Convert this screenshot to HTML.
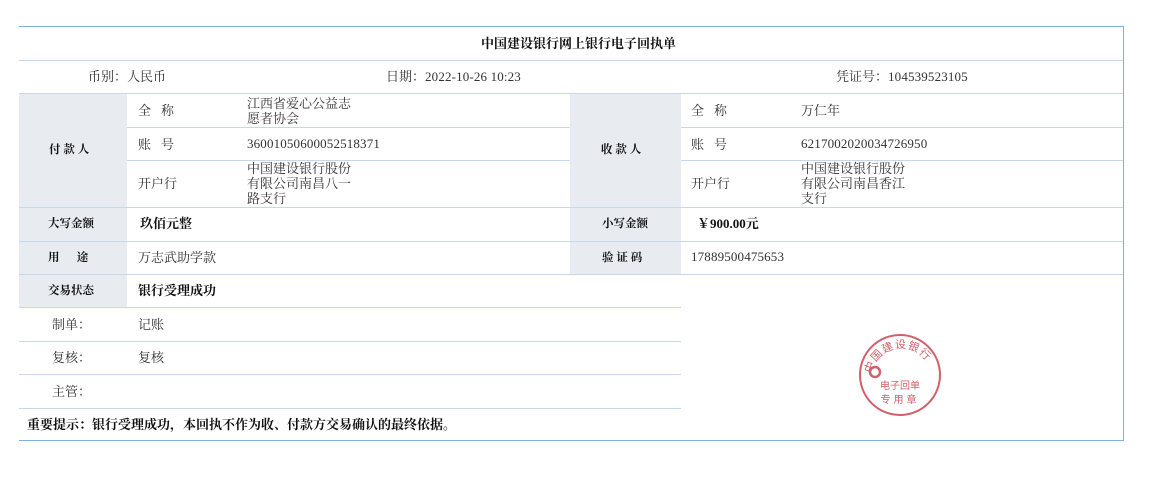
<!DOCTYPE html>
<html><head><meta charset="utf-8"><style>
body{margin:0;width:1157px;height:501px;background:#fff;position:relative;overflow:hidden;font-family:"Noto Serif CJK SC","Liberation Serif",serif;color:#333;}
div{position:absolute;}
.g{background:#e8ecf0;}
.h{height:1px;background:#c6d8ec;}
.t{font-size:13px;line-height:15px;white-space:nowrap;}
.b{font-weight:bold;color:#111;font-size:11.5px;}
.bb{font-weight:bold;color:#111;font-size:13px;}
.n{font-family:"Liberation Serif",serif;font-size:13px;letter-spacing:0.15px;}
</style></head><body>
<div class="g" style="left:19px;top:94px;width:108px;height:214px"></div>
<div class="g" style="left:570px;top:94px;width:111px;height:181px"></div>
<div style="left:19px;top:26px;width:1105px;height:1px;background:#7fb0e0"></div>
<div class="h" style="left:19px;top:60px;width:1105px"></div>
<div class="h" style="left:19px;top:93px;width:1105px"></div>
<div class="h" style="left:127px;top:127px;width:443px"></div>
<div class="h" style="left:681px;top:127px;width:443px"></div>
<div class="h" style="left:127px;top:160px;width:443px"></div>
<div class="h" style="left:681px;top:160px;width:443px"></div>
<div class="h" style="left:19px;top:207px;width:1105px"></div>
<div class="h" style="left:19px;top:241px;width:1105px"></div>
<div class="h" style="left:19px;top:274px;width:1105px"></div>
<div class="h" style="left:19px;top:307px;width:662px"></div>
<div class="h" style="left:19px;top:341px;width:662px"></div>
<div class="h" style="left:19px;top:374px;width:662px"></div>
<div class="h" style="left:19px;top:408px;width:662px"></div>
<div style="left:19px;top:440px;width:1105px;height:1px;background:#7fb0e0"></div>
<div style="left:1123px;top:26px;width:1px;height:415px;background:#7fb0e0"></div>

<div class="t bb" style="left:0;width:1157px;text-align:center;top:35px">中国建设银行网上银行电子回执单</div>
<div class="t" style="left:88px;top:68px">币别：人民币</div>
<div class="t" style="left:386px;top:68px">日期：<span class="n">2022-10-26 10:23</span></div>
<div class="t" style="left:836px;top:68px">凭证号：<span class="n">104539523105</span></div>

<div class="t b" style="left:49px;top:142px">付 款 人</div>
<div class="t" style="left:138px;top:102px">全&nbsp;&nbsp;&nbsp;称</div>
<div class="t" style="left:247px;top:95px">江西省爱心公益志<br>愿者协会</div>
<div class="t" style="left:138px;top:136px">账&nbsp;&nbsp;&nbsp;号</div>
<div class="t n" style="left:247px;top:136px">36001050600052518371</div>
<div class="t" style="left:138px;top:175px">开户行</div>
<div class="t" style="left:247px;top:160px">中国建设银行股份<br>有限公司南昌八一<br>路支行</div>

<div class="t b" style="left:601px;top:142px">收 款 人</div>
<div class="t" style="left:691px;top:102px">全&nbsp;&nbsp;&nbsp;称</div>
<div class="t" style="left:801px;top:102px">万仁年</div>
<div class="t" style="left:691px;top:136px">账&nbsp;&nbsp;&nbsp;号</div>
<div class="t n" style="left:801px;top:136px">6217002020034726950</div>
<div class="t" style="left:691px;top:175px">开户行</div>
<div class="t" style="left:801px;top:160px">中国建设银行股份<br>有限公司南昌香江<br>支行</div>

<div class="t b" style="left:48px;top:216px">大写金额</div>
<div class="t bb" style="left:140px;top:215px">玖佰元整</div>
<div class="t b" style="left:602px;top:216px">小写金额</div>
<div class="t bb" style="left:697px;top:215px">￥<span style="font-family:'Liberation Serif',serif">900.00</span>元</div>

<div class="t b" style="left:48px;top:250px">用&nbsp;&nbsp;&nbsp;&nbsp;&nbsp;&nbsp;途</div>
<div class="t" style="left:138px;top:249px">万志武助学款</div>
<div class="t b" style="left:602px;top:250px">验 证 码</div>
<div class="t n" style="left:691px;top:249px">17889500475653</div>

<div class="t b" style="left:48px;top:283px">交易状态</div>
<div class="t bb" style="left:138px;top:282px">银行受理成功</div>

<div class="t" style="left:52px;top:316px">制单：</div>
<div class="t" style="left:138px;top:316px">记账</div>
<div class="t" style="left:52px;top:349px">复核：</div>
<div class="t" style="left:138px;top:349px">复核</div>
<div class="t" style="left:52px;top:383px">主管：</div>
<div class="t bb" style="left:27px;top:416px">重要提示：银行受理成功，本回执不作为收、付款方交易确认的最终依据。</div>

<svg style="position:absolute;left:855px;top:330px" width="90" height="90" viewBox="0 0 90 90">
<defs><path id="arc" d="M17,55 A30,30 0 1,1 76,42"/></defs>
<circle cx="45" cy="45" r="40" fill="none" stroke="#d0606a" stroke-width="2"/>
<circle cx="20" cy="42" r="5" fill="none" stroke="#d0606a" stroke-width="2.5"/>
<text font-size="11" fill="#d0606a" font-family="Noto Sans CJK SC,sans-serif" letter-spacing="1"><textPath href="#arc" startOffset="12%">中国建设银行</textPath></text>
<text x="45" y="59" font-size="10" fill="#d0606a" text-anchor="middle" font-family="Noto Sans CJK SC,sans-serif">电子回单</text>
<text x="45" y="73" font-size="10" fill="#d0606a" text-anchor="middle" font-family="Noto Sans CJK SC,sans-serif" letter-spacing="3">专用章</text>
</svg>
</body></html>
